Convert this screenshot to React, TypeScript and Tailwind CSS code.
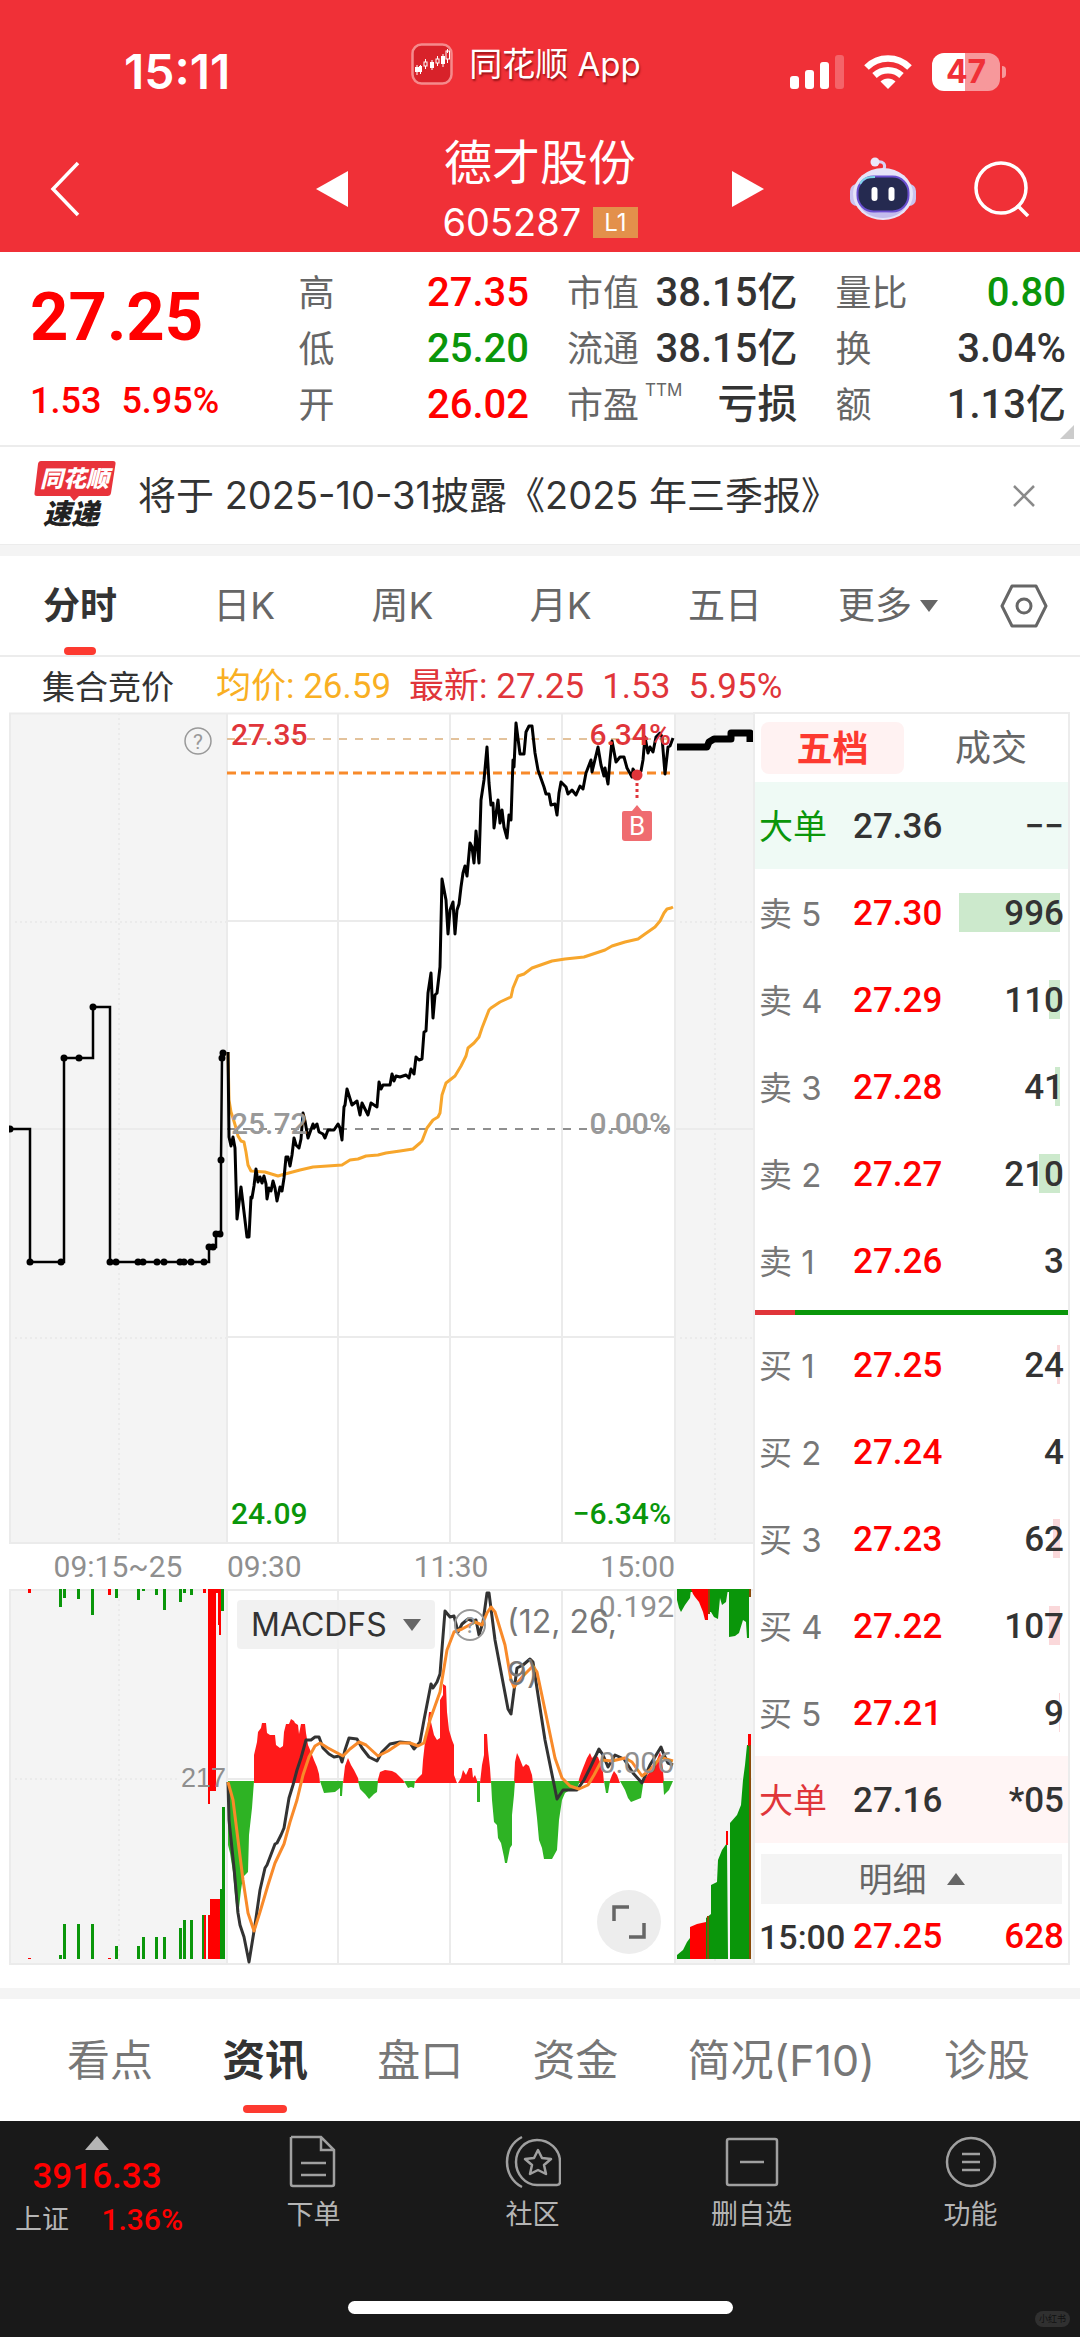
import { useState } from "react";

const NUM = "font-['Roboto','Noto_Sans_CJK_SC',sans-serif]";

interface Level {
  label: string;
  price: string;
  volume: string;
  bar: number;
}

const SELLS: Level[] = [
  { label: "卖 5", price: "27.30", volume: "996", bar: 101 },
  { label: "卖 4", price: "27.29", volume: "110", bar: 11 },
  { label: "卖 3", price: "27.28", volume: "41", bar: 5 },
  { label: "卖 2", price: "27.27", volume: "210", bar: 21 },
  { label: "卖 1", price: "27.26", volume: "3", bar: 0 }
];

const BUYS: Level[] = [
  { label: "买 1", price: "27.25", volume: "24", bar: 3 },
  { label: "买 2", price: "27.24", volume: "4", bar: 0 },
  { label: "买 3", price: "27.23", volume: "62", bar: 7 },
  { label: "买 4", price: "27.22", volume: "107", bar: 11 },
  { label: "买 5", price: "27.21", volume: "9", bar: 1 }
];

const PRICE_LINE =
  "228,1052 229,1137 231,1146 233,1137 235,1148 237,1219 241,1187 247,1237 249,1237 251,1197 252,1198 254,1186 256,1169 258,1182 260,1177 262,1183 264,1176 266,1184 267,1199 269,1188 271,1191 273,1181 275,1188 277,1201 280,1187 282,1191 284,1178 286,1157 288,1157 290,1166 292,1155 294,1138 296,1145 299,1148 301,1139 303,1113 305,1121 308,1138 313,1124 314,1128 317,1124 319,1132 323,1134 325,1138 328,1130 334,1130 338,1124 340,1128 342,1140 344,1107 345,1105 347,1089 352,1105 357,1101 360,1115 362,1103 368,1115 371,1103 377,1107 379,1082 381,1089 383,1085 390,1085 392,1074 394,1081 396,1076 400,1077 406,1075 409,1078 411,1069 414,1074 416,1057 419,1060 422,1059 424,1032 426,1031 428,993 431,973 433,1018 435,995 437,993 440,967 442,879 446,900 448,934 450,910 453,902 455,934 457,910 459,904 461,887 463,873 465,866 467,876 470,843 472,847 474,863 476,831 479,863 481,800 484,780 487,747 489,783 491,805 493,803 494,828 498,800 500,823 502,810 504,827 507,838 509,815 511,820 513,760 514,767 516,723 520,754 524,754 526,732 529,726 532,726 535,753 538,770 544,787 546,794 549,794 551,805 555,804 557,815 559,793 561,782 566,787 568,794 572,790 576,795 580,786 583,789 586,773 591,760 592,772 598,747 601,765 604,776 605,768 608,784 610,760 612,741 616,762 620,757 624,757 627,768 632,777 633,769 637,775 641,771 643,760 645,737 648,753 650,747 653,752 656,737 660,733 662,737 665,774 668,747 670,746 673,738";

const AVG_LINE =
  "228,1052 229,1100 231,1112 233,1118 236,1128 238,1136 241,1141 244,1142 246,1152 248,1165 251,1171 265,1172 278,1176 285,1174 300,1170 313,1167 342,1165 350,1160 358,1159 366,1156 378,1155 386,1153 400,1151 413,1149 420,1143 422,1141 427,1128 433,1120 438,1117 440,1113 442,1095 446,1083 455,1076 461,1066 466,1056 468,1048 474,1043 479,1037 482,1028 489,1010 491,1008 500,1002 511,997 513,988 518,976 524,974 532,968 552,961 565,959 584,957 605,950 612,946 625,942 638,939 645,934 655,927 660,921 664,913 667,909 671,908 673,907";

const AUCTION_LINE =
  "9,1129 30,1129 30,1262 64,1262 64,1058 93,1058 93,1007 110,1007 110,1262 209,1262 209,1247 216,1247 216,1234 221,1234 221,1160 222,1058 222,1052";

const AUCTION_DOTS = [
  [10, 1129], [30, 1262], [61, 1262], [64, 1058], [79, 1058], [93, 1007], [110, 1262], [116, 1262],
  [138, 1262], [143, 1262], [157, 1262], [164, 1262], [180, 1262], [184, 1262], [191, 1262],
  [204, 1262], [209, 1247], [213, 1247], [216, 1234], [220, 1234], [221, 1160], [222, 1058], [223, 1053]
];

const MACD_RED = [
  "254,1783 254,1755 257,1742 258,1732 261,1728 262,1723 266,1723 267,1733 270,1735 275,1735 276,1745 280,1748 283,1746 284,1732 286,1724 289,1724 291,1719 294,1721 295,1723 298,1725 299,1734 301,1724 305,1724 306,1733 308,1745 311,1752 314,1760 317,1767 319,1774 320,1783",
  "343,1783 345,1766 348,1758 351,1765 354,1770 358,1778 359,1783",
  "377,1783 380,1772 385,1770 392,1771 396,1773 403,1780 405,1783",
  "414,1783 418,1778 422,1774 423,1760 425,1742 427,1730 429,1712 431,1712 431,1722 434,1735 437,1740 440,1738 440,1700 443,1695 443,1684 446,1686 447,1712 449,1730 452,1740 454,1745 454,1775 457,1783",
  "458,1783 461,1778 463,1770 466,1775 469,1768 472,1768 473,1778 475,1775 478,1783",
  "480,1783 482,1765 484,1755 484,1734 487,1734 488,1750 490,1768 491,1783",
  "514,1783 515,1762 517,1753 519,1757 521,1762 523,1767 526,1764 529,1766 532,1775 533,1783",
  "578,1783 580,1776 583,1768 587,1758 590,1753 592,1758 595,1755 598,1757 600,1762 603,1772 604,1783",
  "609,1783 612,1775 614,1771 617,1775 620,1783",
  "643,1783 646,1777 651,1770 656,1762 660,1752 662,1760 664,1783"
];

const MACD_GREEN = [
  "228,1781 228,1845 230,1853 233,1872 235,1895 237,1914 239,1908 241,1890 243,1877 248,1872 249,1835 252,1808 254,1781",
  "320,1781 322,1787 324,1793 335,1792 340,1788 340,1796 342,1796 343,1781",
  "358,1781 360,1789 365,1794 369,1799 374,1794 377,1792 378,1781",
  "404,1781 408,1788 411,1787 414,1788 415,1781",
  "477,1781 477,1802 480,1802 480,1781",
  "491,1781 492,1800 494,1822 497,1825 498,1838 501,1843 504,1857 505,1863 507,1863 508,1858 510,1848 512,1845 512,1815 514,1795 515,1781",
  "533,1781 535,1800 537,1818 539,1840 542,1848 544,1859 552,1859 557,1850 559,1820 562,1800 565,1793 570,1790 577,1788 580,1781",
  "604,1781 606,1793 608,1793 610,1781",
  "620,1781 625,1790 628,1798 631,1802 636,1800 641,1798 643,1785 643,1781",
  "663,1781 664,1795 669,1790 673,1781"
];

const DIF_LINE =
  "228,1782 229,1820 234,1868 238,1913 240,1925 244,1937 249,1962 255,1925 260,1890 265,1868 267,1865 275,1844 277,1843 281,1835 284,1828 289,1798 293,1785 297,1770 301,1758 306,1740 311,1740 315,1737 319,1737 323,1748 329,1754 334,1757 340,1756 342,1762 345,1750 349,1738 357,1739 362,1748 369,1757 377,1761 382,1752 390,1744 400,1742 410,1743 414,1749 420,1742 424,1720 431,1684 433,1688 437,1682 440,1674 445,1611 450,1617 454,1616 458,1632 462,1624 468,1619 473,1621 476,1620 479,1635 483,1622 487,1593 489,1593 495,1640 508,1709 511,1714 517,1668 523,1665 530,1659 533,1662 538,1695 545,1740 557,1799 563,1790 577,1790 584,1780 590,1768 599,1749 603,1755 608,1767 615,1755 624,1759 633,1773 642,1783 650,1765 661,1747 664,1755 668,1763 673,1765";

const DEA_LINE =
  "228,1782 233,1800 238,1840 243,1880 248,1913 254,1931 260,1912 268,1885 275,1863 284,1844 290,1822 297,1800 303,1775 309,1757 315,1746 320,1743 328,1748 343,1756 350,1749 359,1742 366,1745 378,1756 388,1751 400,1743 410,1743 418,1746 424,1743 430,1720 440,1692 447,1650 454,1632 462,1629 475,1622 482,1625 487,1613 491,1607 495,1612 505,1645 511,1680 514,1687 523,1676 533,1666 537,1672 545,1710 555,1758 562,1778 570,1786 579,1789 588,1785 594,1775 602,1760 612,1761 625,1758 632,1762 642,1776 650,1770 661,1757 666,1759 673,1761";

// [x, width, height, colour] of the call auction bars
type Bar = [number, number, number, string];
const R = "#ff0000";
const G = "#0a960a";

const TOP_BARS: Bar[] = [
  [28, 3, 4, R], [59, 3, 18, G], [63, 3, 9, G], [77, 3, 10, G], [91, 3, 26, G], [108, 3, 6, R],
  [115, 3, 9, G], [137, 3, 11, G], [142, 3, 2, G], [155, 3, 6, G], [163, 3, 21, G], [179, 3, 13, G],
  [183, 3, 4, G], [190, 3, 6, G], [203, 3, 4, R], [208, 8, 202, R], [208, 2, 215, R], [216, 5, 4, R],
  [218, 3, 36, R], [219, 2, 46, R], [221, 3, 22, G]
];

const BOTTOM_BARS: Bar[] = [
  [28, 3, 1, R], [59, 3, 4, G], [63, 3, 35, G], [77, 3, 35, G], [91, 3, 35, G], [108, 3, 1, R],
  [115, 3, 13, G], [137, 3, 13, G], [142, 3, 22, G], [155, 3, 22, G], [163, 3, 22, G], [179, 3, 31, G],
  [183, 3, 39, G], [190, 3, 39, G], [202, 2, 44, G], [204, 2, 44, R], [208, 3, 44, R], [210, 10, 60, R],
  [220, 2, 70, G], [222, 3, 152, G]
];

function StatusBar() {
  return (
    <div className="grid grid-cols-3 items-center pt-[42px] pr-[74px] pl-[124px]">
      <span className="text-[48px] leading-[60px] font-semibold">15:11</span>
      <div className="mb-4 flex items-center gap-4 justify-self-center pr-[78px]">
        <svg viewBox="0 0 42 42" className="size-[42px]">
          <rect x="1.5" y="1.5" width="39" height="39" rx="9" fill="#d8222a" stroke="#f58a8c" strokeWidth="2.5" />
          <g fill="#fff">
            <rect x="4" y="24" width="4" height="5" />
            <rect x="8" y="23" width="3" height="6" />
            <rect x="19" y="19" width="4" height="6" />
            <rect x="30" y="13" width="4" height="8" />
          </g>
          <g fill="none" stroke="#fff">
            <path d="M6 22v10M9.500 22v9M21 17v10M32 11v13M14.500 16v3M26.500 13v3M26.500 20v3M14.500 23v3M36.500 6v4M36.500 16v4" />
            <rect x="13" y="19" width="3" height="4" />
            <rect x="25" y="16" width="3" height="4" />
            <rect x="35" y="8" width="3.500" height="8" />
          </g>
        </svg>
        <span className="text-[33px] leading-[42px] whitespace-nowrap [text-shadow:1px_2px_2px_rgba(90,0,0,0.6)]">
          同花顺 App
        </span>
      </div>
      <div className="flex items-center justify-end gap-5">
        <svg viewBox="0 0 54 36" className="h-9 w-[54px]" fill="#fff">
          <rect x="0" y="22" width="9" height="13" rx="3" />
          <rect x="15" y="16" width="9" height="19" rx="3" />
          <rect x="30" y="8" width="9" height="27" rx="3" />
          <rect x="45" y="1" width="9" height="34" rx="3" opacity="0.25" />
        </svg>
        <svg viewBox="0 0 48 36" className="h-9 w-12" fill="none" stroke="#fff" strokeWidth="6.500">
          <path d="M2.500 13.500C14.500 1.500 33.500 1.500 45.500 13.500" />
          <path d="M10.500 21.500c7.500-7 19.500-7 27 0" />
          <path d="M16.500 27.500c4-4 11-4 15 0L24 35z" fill="#fff" stroke="none" />
        </svg>
        <div className="flex items-center gap-0.5">
          <span className="flex h-[38px] w-[68px] items-center justify-center rounded-xl bg-linear-to-r from-white from-48% to-[#f7989b] to-48% text-[32px] font-bold text-[#f03037]">
            47
          </span>
          <i className="h-3 w-1 rounded-r-full bg-[#f7989b]" />
        </div>
      </div>
    </div>
  );
}

function Robot() {
  return (
    <svg viewBox="0 0 66 64" className="h-16 w-[66px]">
      <path d="M34 12c2-5-1-8-7-7" fill="none" stroke="#d9d3f5" strokeWidth="3" />
      <circle cx="25" cy="5" r="4.500" fill="#ebe7fb" />
      <rect x="0" y="27" width="14" height="22" rx="7" fill="#c9c3ef" />
      <rect x="52" y="27" width="14" height="22" rx="7" fill="#c9c3ef" />
      <ellipse cx="33" cy="37" rx="30" ry="26" fill="#e6e3f8" />
      <path d="M10 49c8 16 38 16 46 0-10 9-36 9-46 0z" fill="#c3bced" />
      <rect x="7.500" y="19.500" width="51" height="35" rx="16" fill="#252a50" stroke="#6a4fd0" strokeWidth="2" />
      <path d="M10 27c4-7 9-7 15-7" fill="none" stroke="#7fd6e8" strokeWidth="2" />
      <rect x="21.500" y="30" width="6" height="14" rx="3" fill="#fff" />
      <rect x="38.500" y="30" width="6" height="14" rx="3" fill="#fff" />
    </svg>
  );
}

function Header() {
  return (
    <header className="bg-[#f03037] pb-1 text-white">
      <StatusBar />
      <div className="grid grid-cols-[1fr_auto_1fr] items-center pt-7 pr-[50px] pl-[50px]">
        <button aria-label="返回" className="justify-self-start">
          <svg viewBox="0 0 30 56" className="h-14 w-[30px]" fill="none" stroke="#fff" strokeWidth="3.500">
            <path d="M28 2 3 28l25 26" />
          </svg>
        </button>
        <div className="flex items-center justify-between gap-[94px]">
          <button aria-label="上一只">
            <svg viewBox="0 0 32 36" className="h-9 w-8" fill="#fff"><path d="M32 0v36L0 18z" /></svg>
          </button>
          <div className="flex flex-col items-center">
            <h1 className="text-[48px] leading-[66px]">德才股份</h1>
            <div className="flex items-center gap-3 leading-[52px]">
              <span className="text-[38px]">605287</span>
              <span className="bg-[#e3904b] px-[11px] text-[24px] leading-[31px]">L1</span>
            </div>
          </div>
          <button aria-label="下一只">
            <svg viewBox="0 0 32 36" className="h-9 w-8" fill="#fff"><path d="M0 0v36l32-18z" /></svg>
          </button>
        </div>
        <div className="flex items-center gap-[58px] justify-self-end">
          <button aria-label="智能助手"><Robot /></button>
          <button aria-label="搜索">
            <svg viewBox="0 0 56 56" className="size-14" fill="none" stroke="#fff" strokeWidth="3.500">
              <circle cx="27" cy="27" r="25" />
              <path d="m43 44 11 11" />
            </svg>
          </button>
        </div>
      </div>
    </header>
  );
}

interface StatProps {
  label: string;
  sup?: string;
  value: string;
  tone?: string;
}

function Stat({ label, sup, value, tone = "text-[#333]" }: StatProps) {
  return (
    <div className="flex h-14 items-center justify-between">
      <dt className="text-[36px] whitespace-nowrap text-[#666]">
        {label}
        {sup && <sup className="top-[-22px] ml-1.5 text-[17px]">{sup}</sup>}
      </dt>
      <dd className={`${NUM} text-[40px] font-medium whitespace-nowrap ${tone}`}>{value}</dd>
    </div>
  );
}

function Quote() {
  return (
    <section className="relative grid grid-cols-4 gap-x-[38px] border-b-2 border-[#ececec] pt-[13px] pr-[14px] pb-3 pl-[30px]">
      <div className={`${NUM} flex flex-col font-medium text-[#ff0000]`}>
        <strong className="text-[67px] leading-[104px] font-bold">27.25</strong>
        <p className="flex gap-5 text-[36px] leading-[64px]">
          <span>1.53</span>
          <span>5.95%</span>
        </p>
      </div>
      <dl>
        <Stat label="高" value="27.35" tone="text-[#ff0000]" />
        <Stat label="低" value="25.20" tone="text-[#0a960a]" />
        <Stat label="开" value="26.02" tone="text-[#ff0000]" />
      </dl>
      <dl>
        <Stat label="市值" value="38.15亿" />
        <Stat label="流通" value="38.15亿" />
        <Stat label="市盈" sup="TTM" value="亏损" />
      </dl>
      <dl>
        <Stat label="量比" value="0.80" tone="text-[#0a960a]" />
        <Stat label="换" value="3.04%" />
        <Stat label="额" value="1.13亿" />
      </dl>
      <svg viewBox="0 0 14 14" className="absolute right-1.5 bottom-1.5 size-3.5" fill="#ccc"><path d="M14 0v14H0z" /></svg>
    </section>
  );
}

function Notice() {
  return (
    <section className="flex h-[98px] items-center border-b border-[#ececec] pr-[45px] pl-[34px] text-[#333]">
      <svg viewBox="0 0 82 74" className="h-[74px] w-[82px] font-['Noto_Sans_CJK_SC',sans-serif]" role="img" aria-label="同花顺速递">
        <path d="M7 2h72q3 0 2.500 3L77 34q-.5 3-3.500 3H45l-5 5-4-5H3q-3 0-2.500-3L4 5q.5-3 3-3z" fill="#e8333b" />
        <text x="6" y="28" fontSize="23" fontWeight="900" fontStyle="italic" fill="#fff">同花顺</text>
        <text x="9" y="65" fontSize="28" fontWeight="900" fontStyle="italic" fill="#222">速递</text>
      </svg>
      <p className="ml-[22px] flex-1 text-[38px] whitespace-nowrap">将于 2025-10-31披露《2025 年三季报》</p>
      <button aria-label="关闭">
        <svg viewBox="0 0 22 22" className="size-[22px]" stroke="#8a8a8a" strokeWidth="2.500"><path d="m1 1 20 20M21 1 1 21" /></svg>
      </button>
    </section>
  );
}

function PeriodTabs() {
  const [active, setActive] = useState("分时");
  return (
    <nav className="flex h-[101px] items-center border-b-2 border-[#ececec] pr-8 pl-[43px] text-[37px] text-[#666]">
      <div className="flex h-full flex-1 items-center justify-between">
        {["分时", "日K", "周K", "月K", "五日"].map((tab) => (
          <button
            key={tab}
            onClick={() => setActive(tab)}
            className={tab === active ? "relative h-full font-bold text-[#333]" : "h-full"}
          >
            {tab}
            {tab === active && (
              <i className="absolute bottom-0 left-1/2 h-2 w-8 -translate-x-1/2 rounded-full bg-[#fd3a30]" />
            )}
          </button>
        ))}
      </div>
      <button className="ml-[76px] flex items-center gap-2">
        更多
        <svg viewBox="0 0 18 12" className="h-3 w-[18px]" fill="#666"><path d="M0 0h18L9 12z" /></svg>
      </button>
      <button aria-label="设置" className="ml-[62px]">
        <svg viewBox="0 0 48 44" className="h-11 w-12" fill="none" stroke="#666" strokeWidth="3">
          <path d="M12 2h24l10 20-10 20H12L2 22z" strokeLinejoin="round" />
          <circle cx="24" cy="22" r="7" />
        </svg>
      </button>
    </nav>
  );
}

function InfoRow() {
  return (
    <div className={`${NUM} flex h-[55px] items-center px-[42px] pt-1.5 text-[35px] whitespace-nowrap text-[#e0353a]`}>
      <span className="w-[174px] text-[33px] text-[#333]">集合竞价</span>
      <span className="text-[#f9af23]">均价: 26.59</span>
      <span className="ml-[18px]">最新: 27.25</span>
      <span className="ml-[18px]">1.53</span>
      <span className="ml-[18px]">5.95%</span>
    </div>
  );
}

function PriceChart() {
  return (
    <svg viewBox="9 712 744 832" className={`${NUM} block h-auto w-full`} fontSize="30" fontWeight="500">
      <rect x="9" y="713" width="218" height="831" fill="#f4f4f4" />
      <rect x="675" y="713" width="78" height="831" fill="#f4f4f4" />
      <g stroke="#ebebeb" strokeWidth="2">
        <path d="M9 713.500H753M9 1543H753M10 713V1544M227 713V1544M338 713V1544M450 713V1544M562 713V1544M675 713V1544M227 921H675M9 1129H227M675 1129H753M227 1337H675" fill="none" />
        <path d="M119 713V1544M715 713V1544M15 922H227M680 922H753M15 1338H227M680 1338H753" strokeDasharray="2 3" fill="none" />
      </g>
      <path d="M227 739H675" stroke="#e3c29b" strokeWidth="2" strokeDasharray="8 8" />
      <path d="M227 773H675" stroke="#f88a2a" strokeWidth="3" strokeDasharray="9 5" />
      <path d="M227 1129H675" stroke="#8f8f8f" strokeWidth="2" strokeDasharray="8 8" />
      <g fill="none" strokeLinejoin="round">
        <polyline points={AUCTION_LINE} stroke="#000" strokeWidth="2.500" strokeLinejoin="miter" />
        <polyline points={AVG_LINE} stroke="#f7a62c" strokeWidth="3" />
        <polyline points={PRICE_LINE} stroke="#000" strokeWidth="3" />
        <path d="M677 747h30l2-5 5-3h17v-6h19v9" stroke="#000" strokeWidth="7" />
      </g>
      {AUCTION_DOTS.map(([x, y]) => (
        <circle key={`${x}-${y}`} cx={x} cy={y} r="3.500" />
      ))}
      <circle cx="198" cy="741" r="13" fill="none" stroke="#999" strokeWidth="1.500" />
      <text x="198" y="749" fontSize="21" fontWeight="400" textAnchor="middle" fill="#999">?</text>
      <g fill="#e0353a">
        <text x="231" y="745">27.35</text>
        <text x="671" y="745" textAnchor="end">6.34%</text>
      </g>
      <g fill="#999">
        <text x="231" y="1134">25.72</text>
        <text x="671" y="1134" textAnchor="end">0.00%</text>
      </g>
      <g fill="#0a960a">
        <text x="231" y="1524">24.09</text>
        <text x="671" y="1524" textAnchor="end">−6.34%</text>
      </g>
      <circle cx="637" cy="775" r="5.500" fill="#e0353a" />
      <path d="M637 783v18" stroke="#e0353a" strokeWidth="3" strokeDasharray="3 3" />
      <path d="M632 811l5-6 5 6h8q2 0 2 2v25q0 3-3 3h-24q-3 0-3-3v-25q0-2 2-2z" fill="#ef6c70" />
      <text x="637" y="835" fontSize="26" fontWeight="400" textAnchor="middle" fill="#fff">B</text>
    </svg>
  );
}

function Indicator() {
  return (
    <div className="relative">
      <svg viewBox="9 1589 744 376" className={`${NUM} block h-auto w-full`}>
        <rect x="9" y="1589" width="218" height="375" fill="#f4f4f4" />
        <rect x="675" y="1589" width="78" height="375" fill="#f4f4f4" />
        <g stroke="#ebebeb" strokeWidth="2" fill="none">
          <path d="M9 1590H753M9 1964H753M10 1589V1964M227 1589V1964M338 1589V1964M450 1589V1964M562 1589V1964M675 1589V1964M227 1779H675" />
          <path d="M119 1589V1964M715 1589V1964M15 1779H180M680 1779H753" strokeDasharray="2 3" />
        </g>
        {TOP_BARS.map(([x, w, h, fill], i) => (
          <rect key={i} x={x} y="1589" width={w} height={h} fill={fill} />
        ))}
        {BOTTOM_BARS.map(([x, w, h, fill], i) => (
          <rect key={i} x={x} y={1959 - h} width={w} height={h} fill={fill} />
        ))}
        {MACD_RED.map((points) => <polygon key={points} points={points} fill="#ff1a1a" />)}
        {MACD_GREEN.map((points) => <polygon key={points} points={points} fill="#2eb324" />)}
        <g fill={G}>
          <polygon points="677,1589 677,1600 679,1608 681,1612 685,1605 690,1598 691,1589" />
          <polygon points="708,1589 708,1612 711,1612 714,1617 718,1619 720,1598 722,1605 726,1602 728,1589" />
          <polygon points="729,1589 729,1637 735,1636 739,1633 743,1620 746,1622 747,1638 749,1638 749,1589" />
          <polygon points="677,1959 677,1955 683,1950 687,1942 690,1938 690,1959" />
          <polygon points="706,1959 706,1918 711,1914 711,1885 717,1882 718,1860 722,1850 727,1843 728,1959" />
          <polygon points="730,1959 730,1823 737,1815 741,1805 743,1780 745,1765 747,1745 749,1745 749,1959" />
          <path d="M677 1589H750v3H677z" />
        </g>
        <g fill={R}>
          <polygon points="691,1589 693,1594 695,1597 699,1602 703,1612 705,1620 708,1620 708,1589" />
          <polygon points="690,1959 690,1927 697,1924 706,1922 706,1959" />
          <path d="M748 1734h3v12h-3zM726 1831h2v14h-2z" />
        </g>
        <path d="M709 1589v25M708 1916v43M750 1589v8M750 1745v214" stroke="#8a4a08" strokeWidth="2" />
        <g fill="none" strokeWidth="3" strokeLinejoin="round">
          <polyline points={DIF_LINE} stroke="#333" />
          <polyline points={DEA_LINE} stroke="#f88a2a" />
        </g>
        <g fill="#8f8f8f" textAnchor="end" fontSize="30">
          <text x="674" y="1617">0.192</text>
          <text x="674" y="1773">0.006</text>
          <text x="226" y="1787" fontSize="27" className="font-['Liberation_Sans',sans-serif]">217</text>
        </g>
      </svg>
      <button className="absolute top-[11px] left-[228px] flex h-[49px] items-center gap-4 rounded bg-[#efefef]/90 px-3.5 text-[32px] text-[#333]">
        MACDFS
        <svg viewBox="0 0 18 12" className="h-3 w-[18px]" fill="#666"><path d="M0 0h18L9 12z" /></svg>
      </button>
      <button aria-label="指标说明" className="absolute top-[20px] left-[445px] size-8 rounded-full border-2 border-[#999] text-[22px] leading-7 text-[#999]">
        ?
      </button>
      <span className="absolute top-[7px] left-[498px] w-[124px] text-[32px] leading-[52px] text-[#777]">(12, 26, 9)</span>
      <button aria-label="全屏" className="absolute top-[301px] left-[588px] flex size-16 items-center justify-center rounded-full bg-[#ededed]">
        <svg viewBox="0 0 34 34" className="size-[34px]" fill="none" stroke="#666" strokeWidth="3.500">
          <path d="M2 16V2h15M32 18v14H17" />
        </svg>
      </button>
    </div>
  );
}

function TimeAxis() {
  return (
    <div className={`${NUM} grid h-[45px] grid-cols-[218fr_448fr_78fr] items-center text-[30px] text-[#8f8f8f]`}>
      <span className="text-center">09:15~25</span>
      <div className="flex justify-between">
        <span>09:30</span>
        <span>11:30</span>
        <span>15:00</span>
      </div>
    </div>
  );
}

interface BookTableProps {
  levels: Level[];
  barClass: string;
}

function BookTable({ levels, barClass }: BookTableProps) {
  return (
    <table className="w-full table-fixed whitespace-nowrap">
      <tbody>
        {levels.map((l) => (
          <tr key={l.label} className="h-[87px]">
            <th className="w-[98px] pt-1 pl-1 text-left text-[33px] font-normal text-[#777]">{l.label}</th>
            <td className={`${NUM} pt-1 text-[35px] font-medium text-[#ff0000]`}>{l.price}</td>
            <td className={`${NUM} relative w-28 pt-1 pr-1 text-right text-[35px] font-medium text-[#333]`}>
              <i className={`absolute top-6 right-2 h-[39px] ${barClass}`} style={{ width: l.bar }} />
              <span className="relative">{l.volume}</span>
            </td>
          </tr>
        ))}
      </tbody>
    </table>
  );
}

interface BookRowProps {
  label: string;
  price: string;
  volume: string;
  className: string;
  labelClass: string;
}

function BookRow({ label, price, volume, className, labelClass }: BookRowProps) {
  return (
    <div className={`${NUM} flex items-center pr-1 text-[35px] font-medium ${className}`}>
      <span className={`w-[98px] pl-1 ${labelClass}`}>{label}</span>
      <span>{price}</span>
      <span className="ml-auto">{volume}</span>
    </div>
  );
}

function OrderBook() {
  return (
    <aside className="w-[317px] border-2 border-[#ececec]">
      <div className="grid h-[68px] grid-cols-[143px_1fr] items-center px-1.5 text-[36px]">
        <button className="h-[52px] rounded-lg bg-[#fff2f2] font-bold text-[#fd3a30]">五档</button>
        <button className="pl-4 text-[#666]">成交</button>
      </div>
      <BookRow label="大单" price="27.36" volume="−−" className="h-[87px] bg-[#effaf5] pt-1 text-[#333]" labelClass="text-[34px] font-normal text-[#0a960a]" />
      <BookTable levels={SELLS} barClass="bg-[#cce9cc]" />
      <div className="my-1.5 flex h-[5px] bg-[#0a960a]"><i className="w-10 bg-[#e0353a]" /></div>
      <BookTable levels={BUYS} barClass="bg-[#fad8da]" />
      <BookRow label="大单" price="27.16" volume="*05" className="h-[87px] bg-[#fff5f5] pt-1 text-[#333]" labelClass="text-[34px] font-normal text-[#e0353a]" />
      <button className="mx-1.5 mt-[11px] flex h-[50px] w-[301px] items-center justify-center gap-5 bg-[#f4f4f4] text-[34px] text-[#666]">
        明细
        <svg viewBox="0 0 18 12" className="h-3 w-[18px]" fill="#666"><path d="M0 12h18L9 0z" /></svg>
      </button>
      <BookRow label="15:00" price="27.25" volume="628" className="h-[59px] pt-2 text-[#ff0000]" labelClass="text-[34px] text-[#333]" />
    </aside>
  );
}

function SectionTabs() {
  const [active, setActive] = useState("资讯");
  return (
    <nav className="flex h-[122px] items-center justify-between pr-[50px] pl-[67px] text-[43px] text-[#777]">
      {["看点", "资讯", "盘口", "资金", "简况(F10)", "诊股"].map((tab) => (
        <button
          key={tab}
          onClick={() => setActive(tab)}
          className={tab === active ? "relative h-full font-bold whitespace-nowrap text-[#333]" : "h-full whitespace-nowrap"}
        >
          {tab}
          {tab === active && (
            <i className="absolute bottom-2 left-1/2 h-2 w-11 -translate-x-1/2 rounded-full bg-[#fd3a30]" />
          )}
        </button>
      ))}
    </nav>
  );
}

const ACTIONS = [
  {
    label: "下单",
    icon: <path d="M5 3h30l13 13v34q0 2-2 2H7q-2 0-2-2V3M35 3v13h13M15 29h25M15 41h25" />
  },
  {
    label: "社区",
    icon: (
      <>
        <path d="M32 6c-12 0-21 10-21 22s9 23 21 23h20q3 0 3-3V28C55 15 44 6 32 6z" />
        <path d="M17 3C-3 13-3 43 17 53" />
        <path d="m33 16 4 8 9 1-7 6 2 9-8-4-8 4 2-9-7-6 9-1z" strokeLinejoin="round" />
      </>
    )
  },
  {
    label: "删自选",
    icon: (
      <>
        <rect x="3" y="5" width="50" height="46" rx="2" />
        <path d="M16 28h24" />
      </>
    )
  },
  {
    label: "功能",
    icon: (
      <>
        <circle cx="28" cy="28" r="24" />
        <path d="M19 20h18M19 28h18M19 36h18" />
      </>
    )
  }
];

function BottomBar() {
  return (
    <footer className="bg-[#191919] text-[27px] text-[#b5b5b5]">
      <div className="flex items-start pt-[13px] pl-[15px]">
        <button className="mr-[21px] flex w-[168px] flex-col items-center">
          <svg viewBox="0 0 24 14" className="mt-0.5 mr-1 h-3.5 w-6" fill="#b5b5b5"><path d="M0 14h24L12 0z" /></svg>
          <span className={`${NUM} mr-1 text-[35px] leading-[54px] font-medium text-[#ff0000]`}>3916.33</span>
          <span className="flex w-full justify-between leading-8">
            上证
            <span className={`${NUM} text-[30px] font-medium text-[#ff0000]`}>1.36%</span>
          </span>
        </button>
        <div className="grid flex-1 grid-cols-4">
          {ACTIONS.map((a) => (
            <button key={a.label} className="flex flex-col items-center">
              <svg viewBox="0 0 56 56" className="size-14" fill="none" stroke="#a0a0a0" strokeWidth="2.500">{a.icon}</svg>
              <span className="leading-[50px]">{a.label}</span>
            </button>
          ))}
        </div>
      </div>
      <div className="relative pt-[61px] pb-[23px]">
        <div className="mx-auto h-[13px] w-[385px] rounded-full bg-white" />
        <span className="absolute right-2.5 bottom-2.5 rounded-full bg-[#303030] px-1 text-[9px] leading-4 text-[#111]">小红书</span>
      </div>
    </footer>
  );
}

export default function App() {
  return (
    <div className="bg-white font-['Inter','Noto_Sans_CJK_SC',sans-serif]">
      <Header />
      <Quote />
      <Notice />
      <div className="h-[11px] bg-[#f4f4f4]" />
      <PeriodTabs />
      <InfoRow />
      <main className="flex items-start pr-[10px] pb-[23px] pl-[9px]">
        <div className="min-w-0 flex-1">
          <PriceChart />
          <TimeAxis />
          <Indicator />
        </div>
        <OrderBook />
      </main>
      <div className="h-[11px] bg-[#f4f4f4]" />
      <SectionTabs />
      <BottomBar />
    </div>
  );
}
